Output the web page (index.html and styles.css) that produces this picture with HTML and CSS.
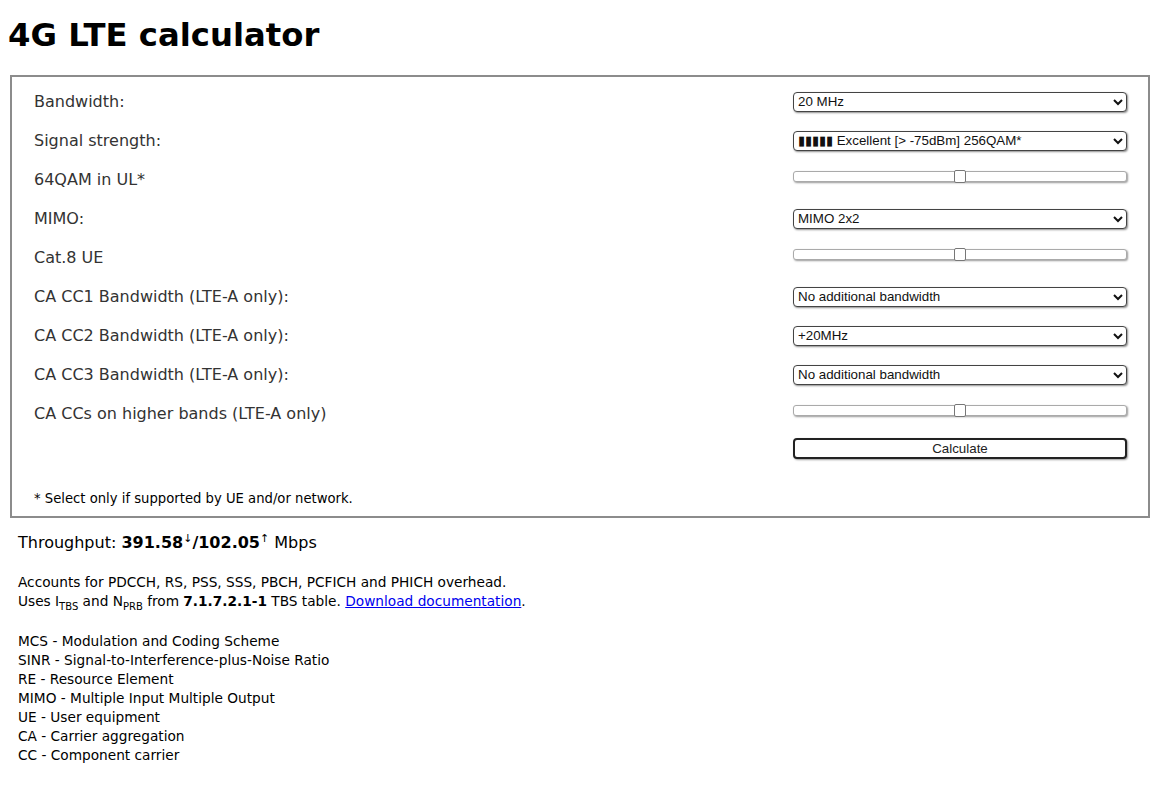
FILE: index.html
```html
<!DOCTYPE html>
<html>
<head>
<meta charset="utf-8">
<title>4G LTE calculator</title>
<link rel="stylesheet" href="styles.css">
</head>
<body>
<h1 class="title">4G LTE calculator</h1>
<form class="calc">
  <div class="row"><span class="label">Bandwidth:</span>
    <select class="ctl"><option>20 MHz</option></select></div>
  <div class="row"><span class="label">Signal strength:</span>
    <select class="ctl"><option>▮▮▮▮▮ Excellent [&gt; -75dBm] 256QAM*</option></select></div>
  <div class="row"><span class="label">64QAM in UL*</span>
    <input class="ctl range" type="range" min="0" max="1" step="0.5" value="0.5"></div>
  <div class="row"><span class="label">MIMO:</span>
    <select class="ctl"><option>MIMO 2x2</option></select></div>
  <div class="row"><span class="label">Cat.8 UE</span>
    <input class="ctl range" type="range" min="0" max="1" step="0.5" value="0.5"></div>
  <div class="row"><span class="label">CA CC1 Bandwidth (LTE-A only):</span>
    <select class="ctl"><option>No additional bandwidth</option></select></div>
  <div class="row"><span class="label">CA CC2 Bandwidth (LTE-A only):</span>
    <select class="ctl"><option>+20MHz</option></select></div>
  <div class="row"><span class="label">CA CC3 Bandwidth (LTE-A only):</span>
    <select class="ctl"><option>No additional bandwidth</option></select></div>
  <div class="row"><span class="label">CA CCs on higher bands (LTE-A only)</span>
    <input class="ctl range" type="range" min="0" max="1" step="0.5" value="0.5"></div>
  <div class="row btnrow"><button type="button" class="ctl btn">Calculate</button></div>
  <p class="note">* Select only if supported by UE and/or network.</p>
</form>
<div class="results">
  <p class="through">Throughput: <b>391.58</b><sup class="arr">↓</sup><b>/102.05</b><sup class="arr">↑</sup> Mbps</p>
  <p class="info">Accounts for PDCCH, RS, PSS, SSS, PBCH, PCFICH and PHICH overhead.<br>
  Uses I<sub>TBS</sub> and N<sub>PRB</sub> from <b>7.1.7.2.1-1</b> TBS table. <a href="#">Download documentation</a>.</p>
  <p class="info">MCS - Modulation and Coding Scheme<br>
  SINR - Signal-to-Interference-plus-Noise Ratio<br>
  RE - Resource Element<br>
  MIMO - Multiple Input Multiple Output<br>
  UE - User equipment<br>
  CA - Carrier aggregation<br>
  CC - Component carrier</p>
</div>
</body>
</html>
```
FILE: styles.css
```css
body {
  margin: 8px;
  font-family: "DejaVu Sans", Verdana, sans-serif;
  color: #000;
  background: #fff;
}
.title {
  font-size: 32.3px;
  font-weight: bold;
  margin: 9px 0 21px 0;
  line-height: 37px;
}
.calc {
  box-sizing: border-box;
  width: 1140px;
  margin: 0 0 0 2px;
  border: 2px solid #8c8c8c;
  padding: 5px 21px 9px 22px;
}
.row {
  display: flex;
  justify-content: space-between;
  align-items: center;
  height: 39px;
}
.label {
  font-size: 16px;
  color: #333;
}
.ctl {
  width: 334px;
  box-sizing: border-box;
}
select.ctl {
  height: 20px;
  font-family: "Liberation Sans", Arial, sans-serif;
  font-size: 13.33px;
  color: #111;
  background: #fff;
  border: 1px solid #444;
  border-radius: 4px;
  box-shadow: 1px 1px 2px rgba(0,0,0,0.45);
  padding: 0;
  margin: 0;
}
.range {
  -webkit-appearance: none;
  appearance: none;
  height: 13px;
  margin: 0 0 6px 0;
  background: transparent;
}
.range::-webkit-slider-runnable-track {
  height: 11px;
  border: 1px solid #aaa;
  border-radius: 3px;
  background: #fff;
  box-shadow: 1px 1px 2px rgba(0,0,0,0.4);
}
.range::-webkit-slider-thumb {
  -webkit-appearance: none;
  width: 12px;
  height: 13px;
  margin-top: -2px;
  border: 1px solid #777;
  border-radius: 2px;
  background: #fff;
  box-sizing: border-box;
}
.btnrow {
  height: 31px;
  justify-content: flex-end;
}
.btn {
  height: 21px;
  margin-top: -1px;
  font-family: "Liberation Sans", Arial, sans-serif;
  font-size: 13.33px;
  color: #222;
  background: #fff;
  border: 2px solid #222;
  border-radius: 4px;
  box-shadow: 1px 1px 2px rgba(0,0,0,0.4);
  padding: 0;
}
.note {
  margin: 27px 0 0 0;
  font-size: 13.2px;
  line-height: 16px;
  color: #000;
}
.results {
  padding-left: 10px;
}
.through {
  margin: 14px 0 20px 0;
  font-size: 16px;
  line-height: 21px;
}
.arr {
  font-size: 11px;
  font-weight: normal;
  line-height: 0;
}
.info {
  margin: 0 0 21px 0;
  font-size: 13.7px;
  line-height: 19px;
}
.info sub {
  font-size: 10px;
  line-height: 0;
}
.info a {
  color: #00e;
}
```
